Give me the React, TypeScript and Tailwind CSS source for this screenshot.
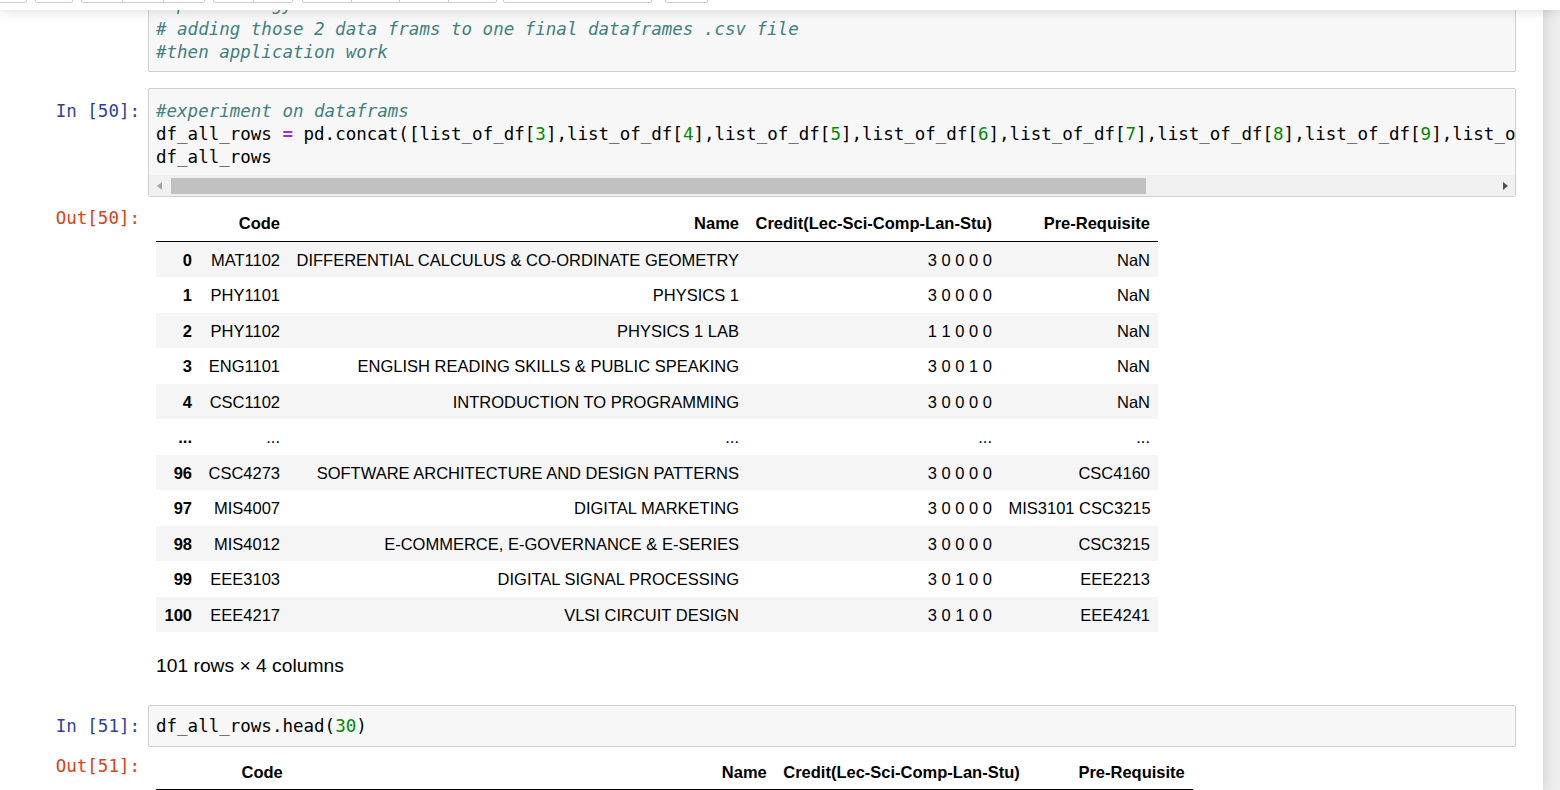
import React from "react";

const MONO = "font-['DejaVu_Sans_Mono',monospace] text-[17.5px] leading-[23px]";
const SANS = "font-['Liberation_Sans',Arial,sans-serif]";

const Cm = ({ children }: { children: React.ReactNode }) => (
  <span className="italic text-[#408080]">{children}</span>
);
const Num = ({ children }: { children: React.ReactNode }) => (
  <span className="text-[#008800]">{children}</span>
);
const Op = ({ children }: { children: React.ReactNode }) => (
  <span className="font-bold text-[#aa22ff]">{children}</span>
);

const InPrompt = ({ n, pad }: { n: number; pad: string }) => (
  <div className={`w-[148px] shrink-0 pr-[8px] text-right text-[#303f9f] whitespace-pre ${MONO} ${pad}`}>
    In [{n}]:
  </div>
);

const OutPrompt = ({ n }: { n: number }) => (
  <div className={`w-[148px] shrink-0 pr-[8px] pt-[1.5px] text-right text-[#d84315] ${MONO}`}>Out[{n}]:</div>
);

function BtnGroup({ className, parts }: { className: string; parts: number }) {
  return (
    <div className={`-mt-[27px] flex h-[30px] shrink-0 rounded-b-[2px] border border-[#cccccc] bg-white ${className}`}>
      {Array.from({ length: parts }).map((_, i) => (
        <div key={i} className={i ? "flex-1 border-l border-[#cccccc]" : "flex-1"} />
      ))}
    </div>
  );
}

function Toolbar() {
  return (
    <div className="absolute left-0 right-0 top-0 z-20 h-[10px] bg-white shadow-[0_0_12px_1px_rgba(87,87,87,0.2)]">
      <div className="flex items-start">
        <BtnGroup className="-ml-[5px] w-[32px]" parts={1} />
        <BtnGroup className="ml-[8px] w-[38px]" parts={1} />
        <BtnGroup className="ml-[8px] w-[124px]" parts={3} />
        <BtnGroup className="ml-[8px] w-[80px]" parts={2} />
        <BtnGroup className="ml-[9px] w-[195px]" parts={4} />
        <BtnGroup className="ml-[6px] w-[149px]" parts={1} />
        <BtnGroup className="ml-[13px] w-[43px]" parts={1} />
      </div>
    </div>
  );
}

type Row = [string, string, string, string, string];

const rows: Row[] = [
  ["0", "MAT1102", "DIFFERENTIAL CALCULUS & CO-ORDINATE GEOMETRY", "3 0 0 0 0", "NaN"],
  ["1", "PHY1101", "PHYSICS 1", "3 0 0 0 0", "NaN"],
  ["2", "PHY1102", "PHYSICS 1 LAB", "1 1 0 0 0", "NaN"],
  ["3", "ENG1101", "ENGLISH READING SKILLS & PUBLIC SPEAKING", "3 0 0 1 0", "NaN"],
  ["4", "CSC1102", "INTRODUCTION TO PROGRAMMING", "3 0 0 0 0", "NaN"],
  ["...", "...", "...", "...", "..."],
  ["96", "CSC4273", "SOFTWARE ARCHITECTURE AND DESIGN PATTERNS", "3 0 0 0 0", "CSC4160"],
  ["97", "MIS4007", "DIGITAL MARKETING", "3 0 0 0 0", "MIS3101 CSC3215"],
  ["98", "MIS4012", "E-COMMERCE, E-GOVERNANCE & E-SERIES", "3 0 0 0 0", "CSC3215"],
  ["99", "EEE3103", "DIGITAL SIGNAL PROCESSING", "3 0 1 0 0", "EEE2213"],
  ["100", "EEE4217", "VLSI CIRCUIT DESIGN", "3 0 1 0 0", "EEE4241"],
];

const headRows: Row[] = rows.slice(0, 3);

const CELL = "px-[8.25px] pt-[9px] pb-[7.5px] leading-[19px] text-right align-middle whitespace-nowrap";
const HEAD = ["Code", "Name", "Credit(Lec-Sci-Comp-Lan-Stu)", "Pre-Requisite"];

function DataTable({ data, widths, total }: { data: Row[]; widths: string[]; total: string }) {
  return (
    <table className={`table-fixed border-collapse text-[16.5px] text-black ${SANS} ${total}`}>
      <colgroup>
        {widths.map((w, i) => (
          <col key={i} className={w} />
        ))}
      </colgroup>
      <thead>
        <tr>
          <th className={`${CELL} border-b border-black`} />
          {HEAD.map((h) => (
            <th key={h} className={`${CELL} border-b border-black font-bold`}>
              {h}
            </th>
          ))}
        </tr>
      </thead>
      <tbody>
        {data.map((r, i) => (
          <tr key={i} className={i % 2 === 0 ? "bg-[#f5f5f5]" : "bg-white"}>
            <th className={`${CELL} font-bold`}>{r[0]}</th>
            <td className={CELL}>{r[1]}</td>
            <td className={CELL}>{r[2]}</td>
            <td className={CELL}>{r[3]}</td>
            <td className={CELL}>{r[4]}</td>
          </tr>
        ))}
      </tbody>
    </table>
  );
}

function Scrollbar() {
  return (
    <div className="flex h-[21px] items-center bg-[#f0f0f0]">
      <div className="flex h-full w-[20px] items-center justify-center">
        <svg width="5" height="8" viewBox="0 0 5 8">
          <path d="M5 0 L0 4 L5 8 Z" fill="#a3a3a3" />
        </svg>
      </div>
      <div className="ml-[2px] h-[16px] w-[975px] bg-[#c1c1c1]" />
      <div className="flex-1" />
      <div className="flex h-full w-[20px] items-center justify-center">
        <svg width="5" height="8" viewBox="0 0 5 8">
          <path d="M0 0 L5 4 L0 8 Z" fill="#505050" />
        </svg>
      </div>
    </div>
  );
}

const dfs = [3, 4, 5, 6, 7, 8, 9, 10, 11, 12];

export default function App() {
  return (
    <div className="relative flex h-[790px] w-full overflow-hidden bg-[#eeeeee]">
      <Toolbar />

      {/* notebook container */}
      <div className="relative z-10 flex w-[1543px] shrink-0 flex-col bg-white shadow-[0_0_12px_1px_rgba(87,87,87,0.2)]">
        {/* cell scrolled partly out of view */}
        <div className="-mt-[16px] flex">
          <div className="w-[148px] shrink-0" />
          <div className="w-[1368px] overflow-hidden rounded-[2px] border border-[#cfcfcf] bg-[#f7f7f7]">
            <div className={`pb-[7px] pl-[7px] pt-[10px] whitespace-pre ${MONO}`}>
              <div className="mb-[4px] leading-[19px]"><Cm># pd strategy</Cm></div>
              <div><Cm># adding those 2 data frams to one final dataframes .csv file</Cm></div>
              <div><Cm>#then application work</Cm></div>
            </div>
          </div>
        </div>

        {/* In [50] */}
        <div className="mt-[16px] flex">
          <InPrompt n={50} pad="pt-[12px]" />
          <div className="w-[1368px] overflow-hidden rounded-[2px] border border-[#cfcfcf] bg-[#f7f7f7]">
            <div className={`overflow-hidden pb-[6px] pl-[7px] pt-[11px] whitespace-pre text-black ${MONO}`}>
              <div><Cm>#experiment on dataframs</Cm></div>
              <div>
                df_all_rows <Op>=</Op> pd.concat([
                {dfs.map((d, i) => (
                  <span key={d}>
                    list_of_df[<Num>{d}</Num>]{i < dfs.length - 1 ? "," : ""}
                  </span>
                ))}
                ])
              </div>
              <div>df_all_rows</div>
            </div>
            <Scrollbar />
          </div>
        </div>

        {/* Out [50] */}
        <div className="mt-[8px] flex">
          <OutPrompt n={50} />
          <div className="pl-[8px]">
            <DataTable
              data={rows}
              total="w-[1002.25px]"
              widths={["w-[44.25px]", "w-[88px]", "w-[459px]", "w-[253px]", "w-[158px]"]}
            />
            <p className={`mt-[22.5px] text-[19.25px] leading-[22px] text-black ${SANS}`}>101 rows × 4 columns</p>
          </div>
        </div>

        {/* In [51] */}
        <div className="mt-[28px] flex">
          <InPrompt n={51} pad="pt-[10px]" />
          <div className="w-[1368px] overflow-hidden rounded-[2px] border border-[#cfcfcf] bg-[#f7f7f7]">
            <div className={`pb-[8px] pl-[7px] pt-[9px] whitespace-pre text-black ${MONO}`}>
              df_all_rows.head(<Num>30</Num>)
            </div>
          </div>
        </div>

        {/* Out [51] */}
        <div className="mt-[7px] flex">
          <OutPrompt n={51} />
          <div className="pl-[8px]">
            <DataTable
              data={headRows}
              total="w-[1037px]"
              widths={["w-[47px]", "w-[88px]", "w-[484px]", "w-[253px]", "w-[165px]"]}
            />
          </div>
        </div>
      </div>

      <div className="flex-1" />
    </div>
  );
}
